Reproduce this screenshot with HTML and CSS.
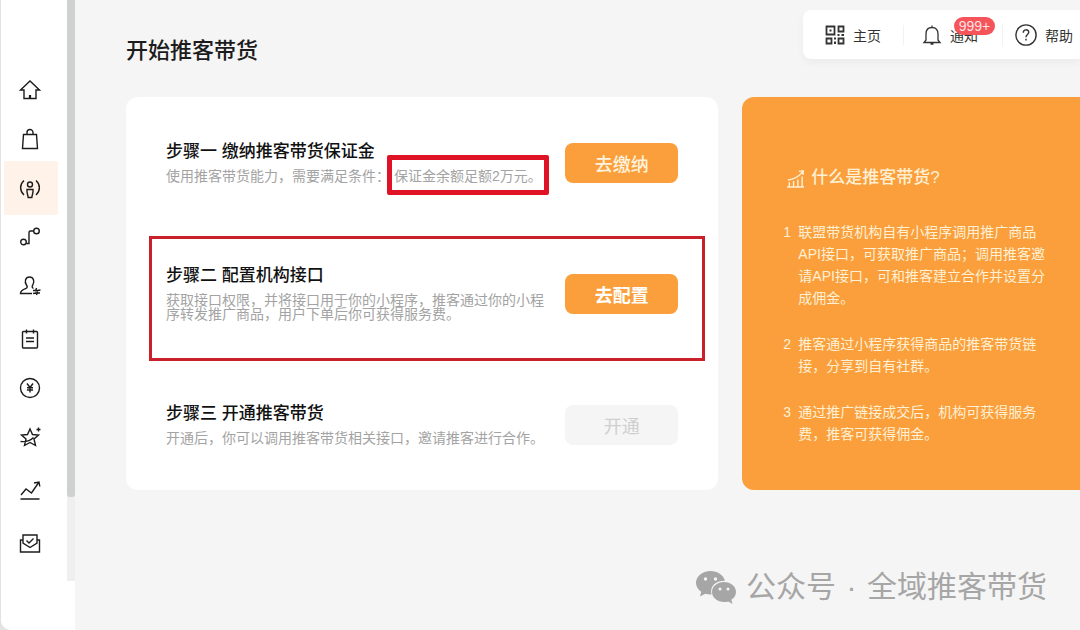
FILE: index.html
```html
<!DOCTYPE html>
<html lang="zh-CN">
<head>
<meta charset="utf-8">
<title>开始推客带货</title>
<link rel="stylesheet" href="styles.css">
</head>
<body>
<div class="app">
  <aside class="sidebar">
    <nav class="nav" aria-label="主导航">
      <div class="nav-group">
        <a class="nav-item" href="#" aria-label="首页"><svg viewBox="0 0 22 22"><path d="M1.500 11 11 2l9.500 9H17v8.500H5V11z"/><path d="M11 16v3.500" stroke-width="2.200"/></svg></a>
        <a class="nav-item" href="#" aria-label="商品"><svg viewBox="0 0 22 22"><path d="M4.500 6.500h13l1 14h-15zM8 6.500V4.500a3 3 0 0 1 6 0v2"/></svg></a>
        <a class="nav-item active" href="#" aria-label="推客" aria-current="page"><svg viewBox="0 0 22 22"><path d="M5 3.500c-4.500 4-4.500 10.500 0 14.500M17 3.500c4.500 4 4.500 10.500 0 14.500"/><circle cx="11" cy="7.500" r="2.500"/><path d="M8 12.500h6v2.500l-1.200 5.500H9.200L8 15z"/></svg></a>
        <a class="nav-item" href="#" aria-label="链路"><svg viewBox="0 0 22 22"><circle cx="4.500" cy="16" r="2.800"/><circle cx="17.500" cy="5" r="2.800"/><path d="M7.500 17.500H10V6.500q0-1.500 1.500-1.500h3"/></svg></a>
        <a class="nav-item" href="#" aria-label="人员"><svg viewBox="0 0 22 22"><path d="M13 18.500H1.500c0-3 2-4 5.500-5.200 1.500-.6 1.500-2 .6-3C5 6.500 6.500 2 10.500 2s5.500 4.500 3.300 8c-1 1.500-.8 2.800.7 3.300"/><path d="M17.500 13l-1 3.500M18.500 16.500l-1 3.500M14 15.500h4.500l3-.5M14 18.500l3-.5h4"/></svg></a>
      </div>
      <div class="nav-group">
        <a class="nav-item" href="#" aria-label="订单"><svg viewBox="0 0 22 22"><rect x="3.500" y="3.500" width="15" height="16.500" rx="1"/><path d="M7.500 1.500v4M14.500 1.500v4M7 10h8M7 13.500h8"/></svg></a>
        <a class="nav-item" href="#" aria-label="资金"><svg viewBox="0 0 22 22"><circle cx="11" cy="11" r="9.500"/><path d="M8 6.500l3 4 3-4M11 10.500v5M8 10.800h6M8 13h6"/></svg></a>
        <a class="nav-item" href="#" aria-label="收藏"><svg viewBox="0 0 22 22"><path d="M11 3l2.500 5.500 6 .5-4.500 4 1.500 6.500-5.500-3-5.500 3L7 13 2.500 9l6-.5zM1.500 15.500c5 .5 10-1 13-4M19.500 1.500v4M17.500 3.500h4"/></svg></a>
      </div>
      <div class="nav-group">
        <a class="nav-item" href="#" aria-label="数据"><svg viewBox="0 0 22 22"><path d="M2 16l5-6 5.500 4L20 3M15 4l5-1 .8 4.500M1.500 20h19"/></svg></a>
      </div>
      <div class="nav-group">
        <a class="nav-item" href="#" aria-label="消息"><svg viewBox="0 0 22 22"><path d="M4 8H1.500v12h19V8H18M4 3h14v8l-7 4.500L4 11z"/><path d="M7.500 8.500l2.500 2.500 4.500-4.500"/></svg></a>
      </div>
    </nav>
    <div class="scroll-track"><div class="scroll-thumb"></div></div>
  </aside>

  <main class="main">
    <header class="header">
      <h1 class="page-title">开始推客带货</h1>
      <div class="topbar">
        <a class="top-item" href="#"><svg viewBox="0 0 20 20" class="qr"><path d="M1.500 1.500h8v8h-8zM13.500 1.500h5v5h-5zM1.500 13.500h5v5h-5zM13.500 13.500h5v5h-5z"/><path class="dots" d="M4.500 4.500h2v2h-2zM12.500 9h2v2h-2zM16.500 9h2.500v2h-2.500zM9 12.500h2v2H9zM9 16.500h2V19H9z"/></svg><span>主页</span></a>
        <a class="top-item" href="#"><svg viewBox="0 0 20 20"><path d="M2 17.500h16l-2-2.500V9c0-4-2-6.500-6-6.500S4 5 4 9v6zM10 .500v2M8.500 19h3"/></svg><span class="notice">通知<span class="badge">999+</span></span></a>
        <a class="top-item" href="#"><svg viewBox="0 0 20 20" class="help"><circle cx="10" cy="10" r="9.200"/><path d="M7.500 8c0-3.500 5-3.500 5-.5 0 2-2.500 2-2.500 4.500M10 13.500v1.500"/></svg><span>帮助</span></a>
      </div>
    </header>

    <div class="content">
      <section class="steps">
        <article class="step">
          <div class="step-text">
            <h2>步骤一 缴纳推客带货保证金</h2>
            <p>使用推客带货能力，需要满足条件：<span class="marked">保证金余额足额2万元。</span></p>
          </div>
          <button class="btn" type="button">去缴纳</button>
        </article>
        <article class="step framed">
          <div class="step-text">
            <h2>步骤二 配置机构接口</h2>
            <p>获取接口权限，并将接口用于你的小程序，推客通过你的小程序转发推广商品，用户下单后你可获得服务费。</p>
          </div>
          <button class="btn strong" type="button">去配置</button>
        </article>
        <article class="step">
          <div class="step-text">
            <h2>步骤三 开通推客带货</h2>
            <p>开通后，你可以调用推客带货相关接口，邀请推客进行合作。</p>
          </div>
          <button class="btn" type="button" disabled>开通</button>
        </article>
      </section>

      <section class="about">
        <h2 class="about-title"><svg viewBox="0 0 20 20"><path d="M1 19h18M3.500 19v-5M8 19v-6.500M12.500 19v-8M17 19V8M2 11.500c6-.5 11-3 15.500-8.500M13.500 2.500l4.500-.5v4"/></svg>什么是推客带货?</h2>
        <ol class="about-list">
          <li><span class="num">1</span><p>联盟带货机构自有小程序调用推广商品API接口，可获取推广商品；调用推客邀请API接口，可和推客建立合作并设置分成佣金。</p></li>
          <li><span class="num">2</span><p>推客通过小程序获得商品的推客带货链接，分享到自有社群。</p></li>
          <li><span class="num">3</span><p>通过推广链接成交后，机构可获得服务费，推客可获得佣金。</p></li>
        </ol>
      </section>
    </div>

    <footer class="watermark">
      <svg viewBox="0 0 40 34"><path d="M14.500 1C6.500 1 0 6.200 0 12.800c0 3.700 2 6.800 5.200 9L4 26.500l5.200-2.800c1.900.5 4 .8 6.300.7C13.500 16 20 10.500 29 10.800 27.500 5 21.500 1 14.500 1z"/><path d="M28 12c-6.700 0-12 4.400-12 10s5.300 10 12 10c1.500 0 3-.2 4.300-.6L36.500 34l-1.200-4.200C38.200 28 40 25.200 40 22c0-5.600-5.300-10-12-10z"/><g class="eyes"><circle cx="9.500" cy="9" r="1.700"/><circle cx="19.500" cy="9" r="1.700"/><circle cx="24" cy="19" r="1.500"/><circle cx="32" cy="19" r="1.500"/></g></svg>
      <span>公众号</span><span class="dot">·</span><span>全域推客带货</span>
    </footer>
  </main>
</div>
</body>
</html>
```
FILE: styles.css
```css
* { box-sizing: border-box; }

body {
  margin: 0;
  background: #e3e3e3;
  color: #1c1c1c;
  font-family: "Liberation Sans", "Noto Sans CJK SC", sans-serif;
  font-size: 14px;
}

h1, h2, p, ol { margin: 0; padding: 0; font-weight: 400; }
a { color: inherit; text-decoration: none; }
svg { fill: none; stroke: currentColor; flex: none; }

.app {
  display: flex;
  min-height: 100vh;
  margin-left: 1px;
  background: #f5f5f5;
  border-bottom-left-radius: 10px;
  overflow: hidden;
}

/* Sidebar */
.sidebar {
  display: flex;
  flex: none;
  width: 74px;
  background: #fff;
}

.nav {
  display: flex;
  flex: 1;
  flex-direction: column;
  gap: 4px;
  padding-top: 65px;
}

.nav-item {
  position: relative;
  display: flex;
  align-items: center;
  height: 49px;
  margin-left: 3px;
  padding-left: 15px;
  width: 54px;
}

.nav-item svg {
  position: relative;
  width: 22px;
  height: 22px;
  stroke-width: 1.4;
}

.nav-item.active::before {
  content: "";
  position: absolute;
  inset: -2px 0 -3px;
  background: #fff3e9;
  border-radius: 2px;
}

.scroll-track {
  flex: none;
  width: 8px;
  height: 581px;
  background: #efefef;
}

.scroll-thumb {
  height: 497px;
  background: #cfd1d1;
  border-radius: 0 0 3px 3px;
}

/* Header */
.main {
  display: flex;
  flex: 1;
  flex-direction: column;
  min-width: 0;
  padding-left: 51px;
}

.header {
  display: flex;
  justify-content: space-between;
  align-items: flex-start;
  padding-top: 10px;
  margin-bottom: 38px;
}

.page-title {
  padding-top: 25px;
  font-size: 22px;
  line-height: 32px;
  height: 49px;
  font-weight: 500;
}

.topbar {
  display: flex;
  align-items: center;
  height: 49px;
  padding-right: 7px;
  background: #fff;
  border-radius: 8px 0 0 8px;
  box-shadow: 0 4px 8px rgba(0, 0, 0, 0.04);
}

.top-item {
  display: flex;
  align-items: center;
  gap: 8px;
  padding: 0 22px;
  border-left: 1px solid #f2f2f2;
  color: #333;
}

.top-item:first-child { border-left: 0; }
.top-item:nth-child(2) { padding-left: 18px; padding-right: 24px; }
.top-item:last-child { padding-left: 12px; padding-right: 0; }

.top-item svg {
  width: 20px;
  height: 20px;
  stroke-width: 1.3;
}

.top-item .qr { stroke-width: 1.8; }
.top-item .dots { fill: currentColor; stroke: none; }
.top-item .help { width: 22px; height: 22px; }

.notice { position: relative; }

.badge {
  position: absolute;
  left: 4px;
  top: -8px;
  width: 41px;
  height: 18px;
  border-radius: 9px;
  background: #f5545a;
  color: #ffe3e3;
  font-size: 14px;
  line-height: 18px;
  text-align: center;
}

/* Cards */
.content {
  display: grid;
  grid-template-columns: 593fr 338fr;
  gap: 24px;
}

.steps {
  display: flex;
  flex-direction: column;
  gap: 83px;
  padding: 45px 40px;
  background: #fff;
  border-radius: 12px;
}

.step {
  position: relative;
  display: flex;
  align-items: center;
  justify-content: space-between;
  gap: 16px;
}

.step-text {
  display: flex;
  flex-direction: column;
  gap: 7px;
}

.step h2 {
  font-size: 17px;
  line-height: 20px;
  font-weight: 500;
  color: #111;
}

.step p {
  color: #a3a3a3;
  line-height: 14px;
}

.marked {
  position: relative;
  display: inline-block;
  margin-left: 4px;
}

.marked::after {
  content: "";
  position: absolute;
  inset: -14px -7px -12px;
  border: 5px solid #e01226;
  border-radius: 2px;
}

.framed::after {
  content: "";
  position: absolute;
  inset: -30px -27px -40px -17px;
  border: 3px solid #c9202b;
  pointer-events: none;
}

.btn {
  flex: none;
  width: 113px;
  height: 40px;
  padding: 0;
  border: 0;
  border-radius: 8px;
  background: #fa9f3c;
  color: #fff3dc;
  font-family: inherit;
  font-size: 18px;
  font-weight: 500;
}

.btn.strong { color: #fff; font-weight: 700; }

.btn:disabled {
  background: #f5f5f5;
  color: #cfcfcf;
  font-weight: 400;
}

.about {
  padding: 69px 29px 45px 41px;
  background: #fa9f3c;
  border-radius: 12px 0 0 12px;
  color: #fff0d4;
}

.about-title {
  display: flex;
  align-items: center;
  gap: 6px;
  margin-bottom: 31px;
  padding-left: 3px;
  font-size: 17px;
  line-height: 24px;
  font-weight: 500;
}

.about-title svg {
  width: 19px;
  height: 19px;
  stroke-width: 1.5;
}

.about-list {
  display: flex;
  flex-direction: column;
  gap: 24px;
  list-style: none;
  line-height: 22px;
}

.about-list li { display: flex; }
.num { flex: none; width: 15px; }

/* Watermark */
.watermark {
  display: flex;
  align-items: center;
  justify-content: flex-end;
  margin-top: auto;
  padding: 0 33px 21px 0;
  color: #a6a6a6;
  font-size: 30px;
  line-height: 44px;
}

.watermark svg {
  width: 40px;
  height: 34px;
  margin-right: 10px;
  fill: currentColor;
  stroke: none;
}

.watermark .eyes { fill: #f5f5f5; }
.watermark .dot { width: 31px; text-align: center; }
```
